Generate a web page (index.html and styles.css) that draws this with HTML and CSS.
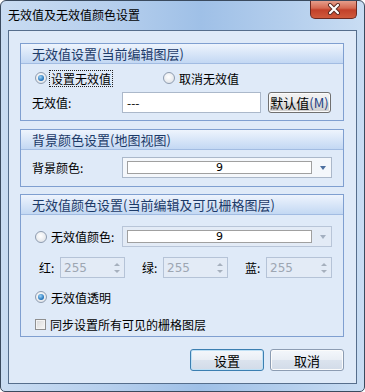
FILE: index.html
```html
<!DOCTYPE html>
<html lang="zh-CN">
<head>
  <meta charset="UTF-8" />
  <title>无效值及无效值颜色设置</title>
  <link rel="stylesheet" href="styles.css">
</head>
<body>

  <div class="window">
    <div class="titlebar">
      <span class="title">无效值及无效值颜色设置</span>
      <div class="close-btn">
        <svg width="16" height="12" viewBox="0 0 16 12">
          <path d="M4 2 L12 10 M12 2 L4 10" stroke="#5a2a22" stroke-width="4" stroke-linecap="round"/>
          <path d="M4 2 L12 10 M12 2 L4 10" stroke="#fff" stroke-width="2.2" stroke-linecap="round"/>
        </svg>
      </div>
    </div>

    <div class="client">
      <!-- 无效值设置 -->
      <div class="group">
        <div class="group-head">无效值设置(当前编辑图层)</div>
        <div class="group-body body-nodata">
          <div class="row">
            <div class="radio checked"><span class="dot"></span><span class="text focus">设置无效值</span></div>
            <div class="radio radio-second"><span class="dot"></span><span class="text">取消无效值</span></div>
          </div>
          <div class="row">
            <span class="label">无效值:</span>
            <div class="textbox">---</div>
            <div class="btn btn-default">默认值<span class="accel">(M)</span></div>
          </div>
        </div>
      </div>

      <!-- 背景颜色设置 -->
      <div class="group group-bg">
        <div class="group-head">背景颜色设置(地图视图)</div>
        <div class="group-body body-bg">
          <div class="row">
            <span class="label">背景颜色:</span>
            <div class="combo">
              <div class="swatch">9</div>
              <span class="arrow"></span>
            </div>
          </div>
        </div>
      </div>

      <!-- 无效值颜色设置 -->
      <div class="group group-color">
        <div class="group-head">无效值颜色设置(当前编辑及可见栅格图层)</div>
        <div class="group-body body-color">
          <div class="row">
            <div class="radio radio-color"><span class="dot"></span><span class="text">无效值颜色:</span></div>
            <div class="combo disabled">
              <div class="swatch">9</div>
              <span class="arrow"></span>
            </div>
          </div>
          <div class="row rgb-row">
            <span class="rgb-label">红:</span>
            <div class="spin">255<span class="spin-arrows"><i class="up"></i><i class="down"></i></span></div>
            <span class="rgb-label">绿:</span>
            <div class="spin">255<span class="spin-arrows"><i class="up"></i><i class="down"></i></span></div>
            <span class="rgb-label">蓝:</span>
            <div class="spin spin-wide">255<span class="spin-arrows"><i class="up"></i><i class="down"></i></span></div>
          </div>
          <div class="row row-small">
            <div class="radio checked"><span class="dot"></span><span class="text">无效值透明</span></div>
          </div>
          <div class="row row-small">
            <div class="check"><span class="box"></span><span class="text">同步设置所有可见的栅格图层</span></div>
          </div>
        </div>
      </div>

      <div class="actions">
        <div class="btn btn-action btn-primary">设置</div>
        <div class="btn btn-action">取消</div>
      </div>
    </div>
  </div>

</body>
</html>
```

FILE: styles.css
```css
* {
  box-sizing: border-box;
}

body {
  margin: 0;
  font-family: "Noto Sans CJK SC", "Noto Sans", sans-serif;
  font-size: 12px;
  color: #000;
  background: #fff;
}

.window {
  width: 365px;
  height: 392px;
  border: 1px solid #3a4a5e;
  border-radius: 6px 6px 5px 5px;
  padding: 0 7px 7px;
  display: flex;
  flex-direction: column;
  background: linear-gradient(to right, #c9dcf2 0%, #b6cfed 30%, #9fc0e7 55%, #b5cfed 80%, #c9ddf3 100%);
  overflow: hidden;
}

.titlebar {
  height: 29px;
  display: flex;
  align-items: center;
  position: relative;
}

.title {
  font-size: 12px;
  line-height: 14px;
  margin-top: -1px;
}

.close-btn {
  position: absolute;
  top: -1px;
  right: 0;
  width: 47px;
  height: 19px;
  border: 1px solid #6b2a22;
  border-top: none;
  border-radius: 0 0 5px 5px;
  background: linear-gradient(#e7a593 0%, #d56a52 45%, #c2412a 55%, #cf5a3c 100%);
  display: flex;
  justify-content: center;
  align-items: center;
}

.client {
  flex: 1;
  border: 1px solid #566e8c;
  background: #dfeaf8;
  padding: 12px 12px 0 11px;
  display: flex;
  flex-direction: column;
}

.group {
  border: 1px solid #7f9fd0;
}

.group-bg {
  margin-top: 8px;
}

.group-color {
  margin-top: 7px;
}

.group-head {
  height: 20px;
  border-bottom: 1px solid #a2bce2;
  background: linear-gradient(#eef4fd, #c3d8f3);
  padding-left: 11px;
  font-size: 13px;
  line-height: 19px;
  color: #1c3a68;
}

.group-body {
  padding: 0 0 0 11px;
}

.body-nodata {
  height: 56px;
  padding-top: 6px;
  display: flex;
  flex-direction: column;
  gap: 6px;
}

.body-nodata .row:first-child {
  height: 16px;
}

.body-bg {
  height: 36px;
  padding-top: 7px;
}

.body-color {
  height: 121px;
  padding-top: 11px;
  display: flex;
  flex-direction: column;
}

.row {
  display: flex;
  align-items: center;
  height: 21px;
}

.rgb-row {
  margin-top: 10px;
}

.row-small {
  height: 16px;
  margin-top: 11px;
}

.label {
  width: 90px;
}

/* radio buttons */
.radio, .check {
  display: flex;
  align-items: center;
  margin-left: 3px;
}

.dot {
  width: 12px;
  height: 12px;
  border-radius: 50%;
  border: 1px solid #8e9cb0;
  background: radial-gradient(circle at 45% 40%, #ffffff, #d9dde3);
  position: relative;
}

.radio.checked .dot::after {
  content: "";
  position: absolute;
  left: 2px;
  top: 2px;
  width: 6px;
  height: 6px;
  border-radius: 50%;
  background: radial-gradient(circle at 40% 35%, #9ed4f7, #1d6fb8 70%, #185a96);
}

.radio .text, .check .text {
  margin-left: 3px;
  padding: 0 1px;
  line-height: 15px;
}

.text.focus {
  outline: 1px dotted #222;
}

.radio-second {
  margin-left: 51px;
}

.radio-color .text {
  width: 72px;
}

.box {
  width: 11px;
  height: 11px;
  border: 1px solid #8f8f8f;
  background: linear-gradient(135deg, #d8d8d8, #f8f8f8);
  box-shadow: inset 0 0 0 1px #f4f4f4;
}

/* text box and buttons */
.textbox {
  width: 139px;
  height: 21px;
  border: 1px solid #abb8ca;
  background: #fff;
  padding-left: 4px;
  line-height: 19px;
}

.btn {
  display: flex;
  justify-content: center;
  align-items: center;
  border: 1px solid #707070;
  border-radius: 3px;
  background: linear-gradient(#f2f2f2 0%, #ebebeb 48%, #dddddd 52%, #cfcfcf 100%);
  box-shadow: inset 0 0 0 1px #fbfbfb;
  font-size: 13px;
}

.btn-default {
  width: 63px;
  height: 21px;
  margin-left: 7px;
}

.accel {
  color: #1e3f86;
}

.actions {
  display: flex;
  justify-content: flex-end;
  gap: 6px;
  margin-top: 12px;
}

.btn-action {
  width: 74px;
  height: 22px;
  border-color: #8c9cb2;
  background: linear-gradient(#f4f7fb 0%, #e9eef5 48%, #dbe3ee 52%, #d2dbe8 100%);
}

.btn-primary {
  border-color: #3c7fb1;
  box-shadow: inset 0 0 0 1px #bfe0f5;
}

/* combo boxes */
.combo {
  width: 210px;
  height: 21px;
  border: 1px solid #abb8ca;
  background: #f4f7fb;
  display: flex;
  align-items: center;
  padding-left: 4px;
}

.swatch {
  width: 185px;
  height: 13px;
  border: 1px solid #a0a0a0;
  background: #fff;
  text-align: center;
  font-family: "DejaVu Sans", sans-serif;
  font-size: 11px;
  line-height: 11px;
}

.arrow {
  margin-left: 8px;
  width: 0;
  height: 0;
  border-left: 3.5px solid transparent;
  border-right: 3.5px solid transparent;
  border-top: 4px solid #4d6f9f;
}

.combo.disabled {
  border-color: #b8c5d8;
  background: #e3ebf6;
}

.combo.disabled .arrow {
  border-top-color: #a3afc0;
}

/* spin boxes */
.rgb-label {
  width: 21px;
}

.rgb-row .rgb-label:first-child {
  margin-left: 7px;
}

.spin {
  width: 65px;
  height: 21px;
  border: 1px solid #b5c3d7;
  background: #e3ebf6;
  color: #9da6b2;
  font-family: "DejaVu Sans", sans-serif;
  font-size: 12px;
  padding-left: 3px;
  display: flex;
  align-items: center;
  justify-content: space-between;
  margin-right: 17px;
}

.spin-wide {
  width: 66px;
  margin-right: 0;
}

.spin-arrows {
  display: flex;
  flex-direction: column;
  gap: 4px;
  margin-right: 4px;
}

.spin-arrows i {
  width: 0;
  height: 0;
  border-left: 3px solid transparent;
  border-right: 3px solid transparent;
}

.spin-arrows .up {
  border-bottom: 3px solid #a6b0bd;
}

.spin-arrows .down {
  border-top: 3px solid #a6b0bd;
}
```
